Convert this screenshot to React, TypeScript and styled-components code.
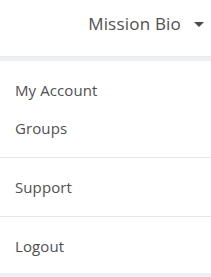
import React from "react";
import styled, { createGlobalStyle } from "styled-components";

const GlobalStyle = createGlobalStyle`
  html, body {
    margin: 0;
    padding: 0;
    background: #eef0f4;
  }
  body {
    font-family: "Open Sans", "Liberation Sans", sans-serif;
    -webkit-font-smoothing: antialiased;
  }
`;

const Page = styled.div`
  width: 211px;
  height: 277px;
  overflow: hidden;
  background: #eef0f4;
`;

const Header = styled.header`
  height: 57px;
  background: #ffffff;
  display: flex;
  align-items: center;
  justify-content: flex-end;
  padding-right: 7px;
  box-sizing: border-box;
  border-bottom: 1px solid #e8eaee;
`;

const UserButton = styled.button`
  display: flex;
  align-items: center;
  gap: 13px;
  background: transparent;
  border: 0;
  padding: 0 0 9px;
  font-family: inherit;
  font-size: 17px;
  letter-spacing: 0.2px;
  color: #505050;
  cursor: pointer;
`;

const Caret = styled.span`
  width: 0;
  height: 0;
  border-left: 5px solid transparent;
  border-right: 5px solid transparent;
  border-top: 5px solid #4a4a4a;
  margin-top: 2px;
`;

const Menu = styled.nav`
  margin-top: 4px;
  background: #ffffff;
  height: 212px;
`;

const Section = styled.div<{ $divider?: boolean }>`
  padding: 10px 0;
  border-top: ${(p) => (p.$divider ? "1px solid #e7e7e9" : "0")};
  display: flex;
  flex-direction: column;
`;

const Item = styled.a`
  height: 38px;
  display: flex;
  align-items: center;
  padding-left: 15px;
  font-size: 15px;
  letter-spacing: 0.1px;
  color: #505050;
  text-decoration: none;
  cursor: pointer;
`;

const sections = [["My Account", "Groups"], ["Support"], ["Logout"]];

const App = () => {
  return (
    <Page>
      <GlobalStyle />
      <Header>
        <UserButton>
          Mission Bio
          <Caret />
        </UserButton>
      </Header>
      <Menu>
        {sections.map((items, i) => (
          <Section key={i} $divider={i > 0}>
            {items.map((label) => (
              <Item key={label}>{label}</Item>
            ))}
          </Section>
        ))}
      </Menu>
    </Page>
  );
};

export default App;
